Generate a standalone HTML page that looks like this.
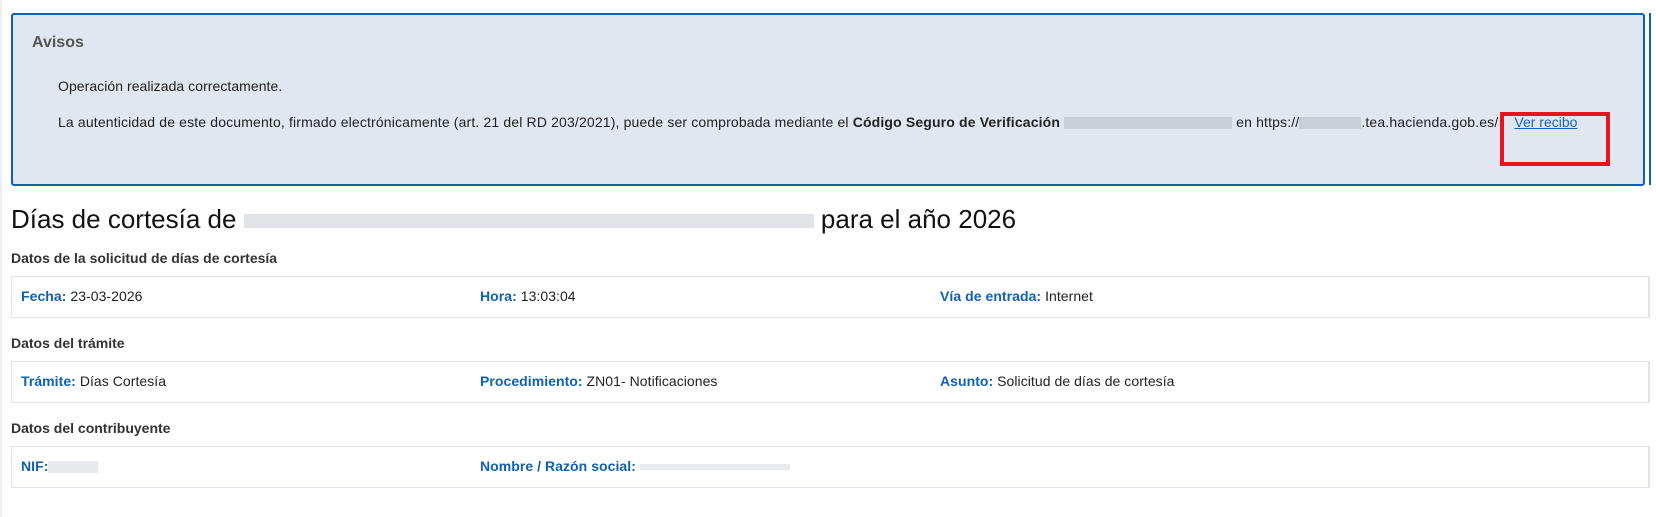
<!DOCTYPE html>
<html><head><meta charset="utf-8"><style>
body{margin:0;width:1656px;height:517px;background:#fff;font-family:"Liberation Sans",Arial,sans-serif;color:#222;position:relative;overflow:hidden}
.abs{position:absolute;white-space:nowrap}
.aviso{position:absolute;left:11px;top:13px;width:1630px;height:169px;background:#e0e7f0;border:2px solid #1060b5;border-radius:3px}
.blur{display:inline-block;background:#c4c8cf;height:12px;vertical-align:middle;opacity:.8}
.row{position:absolute;left:11px;width:1636px;height:40px;border:1px solid #dde4ec;border-right:2px solid #dde4ec}
.lb{color:#1060b5;font-weight:bold}
.h{font-weight:bold;font-size:14px;color:#333}
.t{font-size:14px;letter-spacing:.05px}
</style></head><body>
<div style="position:absolute;left:0;top:0;width:2px;height:517px;background:#eee"></div>
<div class="aviso"></div>
<div style="position:absolute;left:1649px;top:13px;width:2px;height:172px;background:#1060b5"></div>
<div class="abs" style="left:32px;top:34px;font-size:16px;font-weight:bold;color:#555">Avisos</div>
<div class="abs t" style="left:58px;top:78px">Operación realizada correctamente.</div>
<div class="abs t" style="left:58px;top:114px;letter-spacing:.15px">La autenticidad de este documento, firmado electrónicamente (art. 21 del RD 203/2021), puede ser comprobada mediante el <b>Código Seguro de Verificación</b> <span class="blur" style="width:168px"></span> en https://<span class="blur" style="width:62px"></span>.tea.hacienda.gob.es/ <span style="color:#1a63b8;text-decoration:underline;margin-left:12px;letter-spacing:0">Ver recibo</span></div>
<div style="position:absolute;left:1500px;top:112px;width:102px;height:46px;border:4px solid #e8141c"></div>
<div class="abs" style="left:11px;top:204px;font-size:26px;color:#111">Días de cortesía de <span class="blur" style="width:570px;height:14px;opacity:.5"></span> para el año 2026</div>
<div class="abs h" style="left:11px;top:250px">Datos de la solicitud de días de cortesía</div>
<div class="row" style="top:276px"></div>
<div class="abs t" style="left:21px;top:288px"><span class="lb">Fecha:</span> 23-03-2026</div>
<div class="abs t" style="left:480px;top:288px"><span class="lb">Hora:</span> 13:03:04</div>
<div class="abs t" style="left:940px;top:288px"><span class="lb">Vía de entrada:</span> Internet</div>
<div class="abs h" style="left:11px;top:335px">Datos del trámite</div>
<div class="row" style="top:361px"></div>
<div class="abs t" style="left:21px;top:373px"><span class="lb">Trámite:</span> Días Cortesía</div>
<div class="abs t" style="left:480px;top:373px"><span class="lb">Procedimiento:</span> ZN01- Notificaciones</div>
<div class="abs t" style="left:940px;top:373px"><span class="lb">Asunto:</span> Solicitud de días de cortesía</div>
<div class="abs h" style="left:11px;top:420px">Datos del contribuyente</div>
<div class="row" style="top:446px"></div>
<div class="abs t" style="left:21px;top:458px"><span class="lb">NIF:</span><span class="blur" style="width:50px;opacity:.4"></span></div>
<div class="abs t" style="left:480px;top:458px"><span class="lb">Nombre / Razón social:</span> <span class="blur" style="width:150px;height:6px;opacity:.4"></span></div>
</body></html>
